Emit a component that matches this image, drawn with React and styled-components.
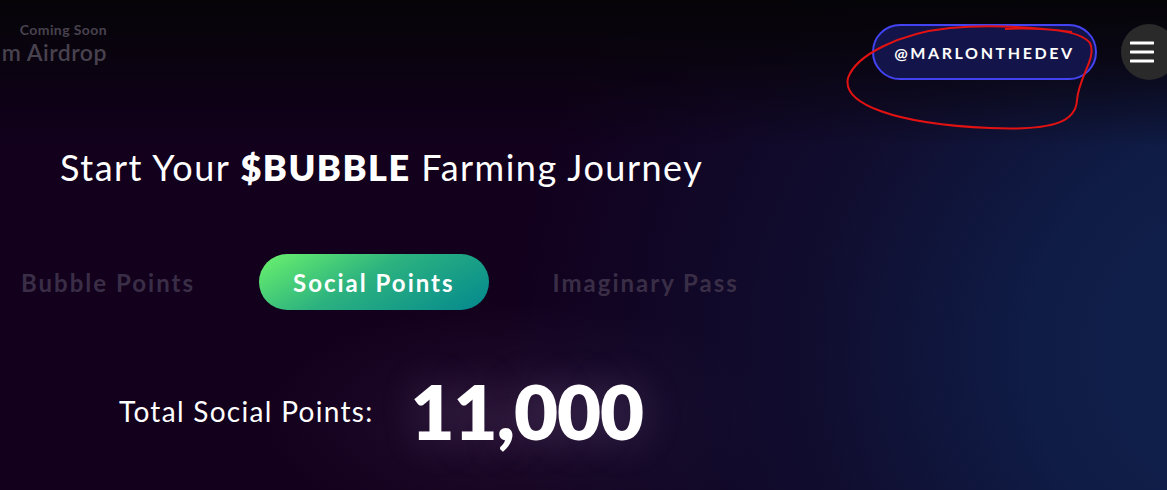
import React from "react";
import styled, { createGlobalStyle } from "styled-components";

const GlobalStyle = createGlobalStyle`
  html, body {
    margin: 0;
    padding: 0;
    background: #110019;
  }
  * {
    box-sizing: border-box;
  }
`;

const Page = styled.div`
  position: relative;
  width: 1167px;
  height: 490px;
  overflow: hidden;
  font-family: "Lato", "Noto Sans", sans-serif;
  color: #fff;
  background:
    linear-gradient(180deg, #050407 0%, rgba(8, 4, 12, 0.8) 12%, rgba(17, 0, 28, 0) 30%),
    radial-gradient(ellipse 800px 680px at 112% 72%, #10224d 0%, #0f1c46 35%, rgba(15, 24, 62, 0.55) 62%, rgba(17, 0, 28, 0) 100%),
    radial-gradient(ellipse 260px 120px at 520px 420px, rgba(60, 40, 75, 0.35) 0%, rgba(17, 0, 28, 0) 100%),
    #12001d;
`;

const TopBar = styled.header`
  display: flex;
  justify-content: space-between;
  align-items: flex-start;
  padding-top: 22px;
  height: 80px;
`;

const Brand = styled.div`
  width: 107px;
  display: flex;
  flex-direction: column;
  align-items: flex-end;
  overflow: hidden;
  color: #48424f;
  font-weight: 700;
  white-space: nowrap;
  .soon {
    font-size: 14px;
    line-height: 16px;
    letter-spacing: 0.4px;
  }
  .name {
    font-size: 23px;
    line-height: 28px;
    font-weight: 600;
    letter-spacing: 0.5px;
  }
`;

const Actions = styled.div`
  display: flex;
  align-items: center;
  gap: 24px;
  margin-top: 2px;
  margin-right: -10px;
`;

const UserButton = styled.button`
  width: 225px;
  height: 56px;
  border-radius: 28px;
  border: 2px solid #4343f2;
  background: #13154a;
  color: #fff;
  font-family: inherit;
  font-size: 16px;
  font-weight: 700;
  letter-spacing: 2.6px;
  cursor: pointer;
`;

const MenuButton = styled.button`
  width: 56px;
  height: 56px;
  border-radius: 50%;
  border: none;
  background: #2b2a2a;
  display: flex;
  align-items: center;
  justify-content: center;
  padding: 0 14px 0 0;
`;

const Heading = styled.h1`
  margin: 66px 0 0 60px;
  font-size: 36px;
  line-height: 42px;
  font-weight: 400;
  letter-spacing: 1.5px;
  b {
    font-weight: 800;
  }
`;

const Tabs = styled.nav`
  display: flex;
  gap: 30px;
  margin: 66px 0 0 -13px;
`;

const Tab = styled.button`
  height: 56px;
  padding: 0 34px;
  border-radius: 28px;
  border: none;
  font-family: inherit;
  font-size: 24px;
  font-weight: 700;
  letter-spacing: 2px;
  color: ${(p) => (p.$active ? "#fff" : "#3a2e47")};
  background: ${(p) =>
    p.$active ? "linear-gradient(150deg, #6cf36c 0%, #2cb27f 45%, #03888f 100%)" : "transparent"};
`;

const Stats = styled.section`
  display: flex;
  align-items: center;
  gap: 37px;
  margin: 62px 0 0 119px;
`;

const Label = styled.div`
  font-size: 28px;
  font-weight: 400;
  letter-spacing: 1.3px;
`;

const Value = styled.div`
  font-size: 76px;
  line-height: 78px;
  font-weight: 800;
  letter-spacing: -1px;
  text-shadow: 0 0 40px rgba(190, 160, 220, 0.25);
`;

const Annotation = styled.svg`
  position: absolute;
  left: 0;
  top: 0;
  pointer-events: none;
`;

function MenuIcon() {
  return (
    <svg width="24" height="22" viewBox="0 0 24 22">
      <path d="M1 2h22M1 11h22M1 20h22" stroke="#fff" strokeWidth="3" strokeLinecap="round" />
    </svg>
  );
}

export default function App() {
  return (
    <>
      <GlobalStyle />
      <Page>
        <TopBar>
          <Brand>
            <span className="soon">Coming Soon</span>
            <span className="name">m Airdrop</span>
          </Brand>
          <Actions>
            <UserButton>@MARLONTHEDEV</UserButton>
            <MenuButton aria-label="menu">
              <MenuIcon />
            </MenuButton>
          </Actions>
        </TopBar>
        <Heading>
          Start Your <b>$BUBBLE</b> Farming Journey
        </Heading>
        <Tabs>
          <Tab>Bubble Points</Tab>
          <Tab $active>Social Points</Tab>
          <Tab>Imaginary Pass</Tab>
        </Tabs>
        <Stats>
          <Label>Total Social Points:</Label>
          <Value>11,000</Value>
        </Stats>
        <Annotation width="1167" height="490" viewBox="0 0 1167 490">
          <path
            d="M1072 32 C1040 28 990 24 950 28 C900 33 856 55 848 78 C842 104 895 124 990 128 C1058 131 1076 120 1077 100 C1079 76 1097 58 1090 43 C1080 30 1040 27 1005 29"
            fill="none"
            stroke="#e31212"
            strokeWidth="2"
          />
        </Annotation>
      </Page>
    </>
  );
}
